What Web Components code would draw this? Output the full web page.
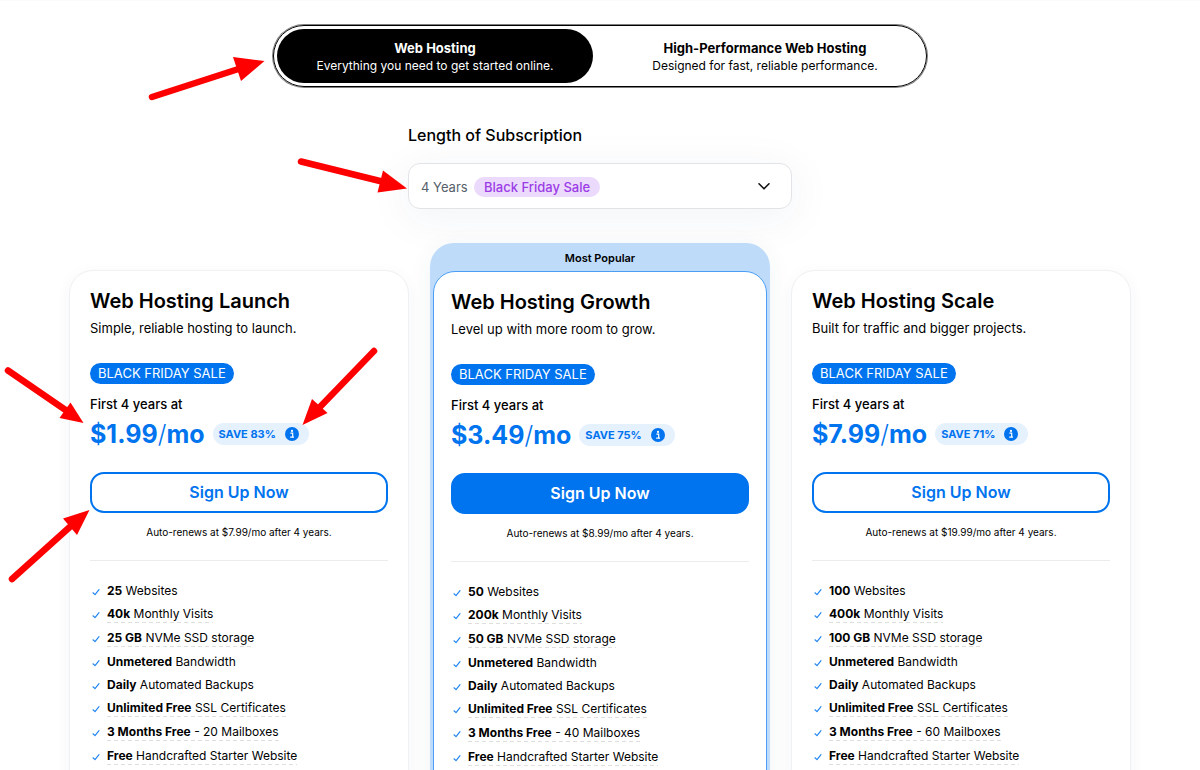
<!DOCTYPE html>
<html lang="en">
<head>
<meta charset="utf-8">
<meta name="viewport" content="width=device-width, initial-scale=1">
<title>Web Hosting Plans</title>
<style>
  html { scrollbar-width: none; }
  body {
    margin: 0;
    background: #fff;
    color: #000;
    font-family: Inter, "Liberation Sans", sans-serif;
    font-size: 12px;
    --blue: #0073ee;
  }
</style>
</head>
<body>
<hosting-page>
  <plan-tabs slot="tabs">
    <plan-tab selected>Web Hosting<span slot="note">Everything you need to get started online.</span></plan-tab>
    <plan-tab>High-Performance Web Hosting<span slot="note">Designed for fast, reliable performance.</span></plan-tab>
  </plan-tabs>
  <term-select slot="term"></term-select>
  <plan-card name="Web Hosting Launch" summary="Simple, reliable hosting to launch." price="$1.99" save="SAVE 83%" renew="$7.99">
    <plan-feature><b>25</b> Websites</plan-feature>
    <plan-feature hint><b>40k</b> Monthly Visits</plan-feature>
    <plan-feature hint><b>25 GB</b> NVMe SSD storage</plan-feature>
    <plan-feature><b>Unmetered</b> Bandwidth</plan-feature>
    <plan-feature><b>Daily</b> Automated Backups</plan-feature>
    <plan-feature hint><b>Unlimited Free</b> SSL Certificates</plan-feature>
    <plan-feature hint><b>3 Months Free</b> - 20 Mailboxes</plan-feature>
    <plan-feature hint><b>Free</b> Handcrafted Starter Website</plan-feature>
  </plan-card>
  <plan-card popular name="Web Hosting Growth" summary="Level up with more room to grow." price="$3.49" save="SAVE 75%" renew="$8.99">
    <plan-feature><b>50</b> Websites</plan-feature>
    <plan-feature hint><b>200k</b> Monthly Visits</plan-feature>
    <plan-feature hint><b>50 GB</b> NVMe SSD storage</plan-feature>
    <plan-feature><b>Unmetered</b> Bandwidth</plan-feature>
    <plan-feature><b>Daily</b> Automated Backups</plan-feature>
    <plan-feature hint><b>Unlimited Free</b> SSL Certificates</plan-feature>
    <plan-feature hint><b>3 Months Free</b> - 40 Mailboxes</plan-feature>
    <plan-feature hint><b>Free</b> Handcrafted Starter Website</plan-feature>
  </plan-card>
  <plan-card name="Web Hosting Scale" summary="Built for traffic and bigger projects." price="$7.99" save="SAVE 71%" renew="$19.99">
    <plan-feature><b>100</b> Websites</plan-feature>
    <plan-feature hint><b>400k</b> Monthly Visits</plan-feature>
    <plan-feature hint><b>100 GB</b> NVMe SSD storage</plan-feature>
    <plan-feature><b>Unmetered</b> Bandwidth</plan-feature>
    <plan-feature><b>Daily</b> Automated Backups</plan-feature>
    <plan-feature hint><b>Unlimited Free</b> SSL Certificates</plan-feature>
    <plan-feature hint><b>3 Months Free</b> - 60 Mailboxes</plan-feature>
    <plan-feature hint><b>Free</b> Handcrafted Starter Website</plan-feature>
  </plan-card>
  <callout-arrows slot="callouts"></callout-arrows>
</hosting-page>

<script>
  const define = (name, html, setup) => {
    const template = document.createElement('template');
    template.innerHTML = html;
    customElements.define(name, class extends HTMLElement {
      connectedCallback() {
        if (this.shadowRoot) return;
        const root = this.attachShadow({ mode: 'open' });
        root.append(template.content.cloneNode(true));
        if (setup) setup(this, root);
      }
    });
  };

  define('hosting-page', `
    <style>
      :host { display: block; position: relative; height: 100vh; overflow: hidden auto; scrollbar-width: none; }
      main { display: flex; flex-direction: column; padding: 24px 20px 40px; border-top: 1px solid #fafafa; }
      .plans {
        display: grid; grid-template-columns: repeat(3, minmax(0, 1fr)); gap: 21px; align-items: start;
        width: 100%; max-width: 1062px; margin: 34px auto 0;
      }
      @media (max-width: 860px) { .plans { grid-template-columns: minmax(0, 380px); justify-content: center; } }
    </style>
    <main>
      <slot name="tabs"></slot>
      <slot name="term"></slot>
      <section class="plans" aria-label="Hosting plans"><slot></slot></section>
    </main>
    <slot name="callouts"></slot>
  `);

  define('plan-tabs', `
    <style>
      :host {
        display: grid; grid-template-columns: 1fr 1fr; gap: 14px; box-sizing: border-box;
        width: 100%; max-width: 654px; margin: 0 auto; padding: 3px;
        border: 1px solid #000; border-radius: 32px; box-shadow: 0 0 0 1px rgba(0, 0, 0, .5);
      }
    </style>
    <slot></slot>
  `, host => host.setAttribute('role', 'tablist'));

  define('plan-tab', `
    <style>
      :host { display: grid; }
      button {
        display: flex; flex-direction: column; align-items: center; justify-content: center;
        height: 54px; padding: 2px 12px 0; border: 0; border-radius: 27px;
        background: none; color: #000; font: 12px/18px Inter, sans-serif; cursor: pointer;
      }
      :host([selected]) button { background: #000; color: #fff; }
      strong { font-size: 13px; font-weight: 700; }
      .note { font-size: 12px; }
    </style>
    <button type="button" role="tab"><strong><slot></slot></strong><span class="note"><slot name="note"></slot></span></button>
  `, (host, root) => {
    root.querySelector('button').setAttribute('aria-selected', host.hasAttribute('selected'));
  });

  define('term-select', `
    <style>
      :host { display: flex; flex-direction: column; gap: 16px; width: 100%; max-width: 384px; margin: 36px auto 0; }
      label { font-size: 16px; line-height: 24px; font-weight: 500; }
      .field { display: grid; align-items: center; border-radius: 12px; box-shadow: 0 8px 44px 4px rgba(20, 60, 110, .05); }
      .field > * { grid-area: 1 / 1; }
      select {
        appearance: none; height: 46px; padding: 2px 12px 0; border: 1px solid #e1e3e6; border-radius: 12px;
        background: #fff; color: #56616b; font: 13px/20px Inter, sans-serif;
      }
      .pill {
        justify-self: start; margin: 2px 0 0 66px; padding: 0 10px; border-radius: 10px;
        background: #ecdafc; color: #9b3ce6; font-size: 13px; line-height: 20px; font-weight: 500; pointer-events: none;
      }
      svg { justify-self: end; margin-right: 21px; pointer-events: none; }
    </style>
    <label for="term">Length of Subscription</label>
    <div class="field">
      <select id="term"><option>4 Years</option></select>
      <span class="pill">Black Friday Sale</span>
      <svg width="14" height="10" viewBox="0 0 14 10" fill="none" stroke="#111" stroke-width="1.6" stroke-linecap="round" stroke-linejoin="round"><path d="M2 2.800 7 7.800 12 2.800"/></svg>
    </div>
  `);

  define('plan-card', `
    <style>
      :host { display: block; min-width: 0; margin-top: 27px; }
      .tag { display: none; }
      .card {
        display: flex; flex-direction: column; align-items: stretch;
        padding: 17px 20px 24px; border: 1px solid #f0f1f3; border-radius: 24px;
        background: #fff; box-shadow: 0 4px 16px rgba(20, 60, 110, .05);
      }
      :host([popular]) { margin-top: 0; padding: 0 3px 3px; border-radius: 24px; background: #bedbfa; box-shadow: 0 4px 24px rgba(20, 60, 110, .06); }
      :host([popular]) .tag { display: block; padding-top: 2px; text-align: center; font-size: 11px; line-height: 26px; font-weight: 600; }
      :host([popular]) .card { padding: 17px 17px 24px; border-color: #4a9ff5; border-radius: 22px; box-shadow: none; }
      h2 { margin: 0; font-size: 20px; line-height: 26px; font-weight: 600; }
      .summary { margin: 4px 0 0; font-size: 13px; line-height: 20px; }
      .sale {
        align-self: flex-start; margin-top: 25px; padding: 0 8px; border-radius: 11px;
        background: var(--blue); color: #fff; font-size: 13px; line-height: 21px;
      }
      .term { margin: 10px 0 0; font-size: 13px; line-height: 20px; font-weight: 500; }
      .price { display: flex; align-items: center; gap: 8px; box-sizing: border-box; height: 38px; padding-top: 2px; color: var(--blue); }
      .amount { font-size: 25px; line-height: 36px; font-weight: 700; }
      .amount i { font-style: normal; font-weight: 300; }
      .save {
        display: flex; align-items: center; gap: 9px; height: 22px; padding: 0 10px 0 6px; border-radius: 11px;
        background: #e6f1fe; font-size: 11px; line-height: 22px; font-weight: 700;
      }
      .info { display: grid; padding: 0; border: 0; background: none; }
      .signup {
        height: 41px; margin-top: 20px; padding: 0 0 2px; border: 2px solid var(--blue); border-radius: 14px;
        background: #fff; color: var(--blue); font: 600 16px/24px Inter, sans-serif;
      }
      :host([popular]) .signup { background: var(--blue); color: #fff; }
      .renew { margin: 11px 0 20px; text-align: center; font-size: 10px; line-height: 16px; }
      hr { width: 100%; margin: 0 0 20px; border: 0; border-top: 1px solid #ececec; }
      .features { display: flex; flex-direction: column; }
    </style>
    <div class="tag">Most Popular</div>
    <article class="card">
      <h2></h2>
      <p class="summary"></p>
      <span class="sale">BLACK FRIDAY SALE</span>
      <p class="term">First 4 years at</p>
      <div class="price">
        <span class="amount"><span class="value"></span><i>/</i>mo</span>
        <span class="save"><span class="percent"></span>
          <button class="info" type="button" aria-label="Savings details">
            <svg width="14" height="14" viewBox="0 0 14 14"><circle cx="7" cy="7" r="7" fill="#0073ee"/><circle cx="7" cy="3.9" r="1.1" fill="#fff"/><path d="M5.4 6.2h2.3v3.6M5.2 10.1h3.8" fill="none" stroke="#fff" stroke-width="1.2"/></svg>
          </button>
        </span>
      </div>
      <button class="signup" type="button">Sign Up Now</button>
      <p class="renew"></p>
      <hr>
      <div class="features" role="list"><slot></slot></div>
    </article>
  `, (host, root) => {
    const put = (selector, text) => { root.querySelector(selector).textContent = text; };
    put('h2', host.getAttribute('name'));
    put('.summary', host.getAttribute('summary'));
    put('.value', host.getAttribute('price'));
    put('.percent', host.getAttribute('save'));
    put('.renew', `Auto-renews at ${host.getAttribute('renew')}/mo after 4 years.`);
  });

  define('plan-feature', `
    <style>
      :host { display: flex; align-items: flex-start; gap: 7px; box-sizing: border-box; height: 23px; padding: 1px 0 0 2px; line-height: 18px; }
      :host([hint]) { height: 24px; }
      svg { flex: none; margin-top: 6px; }
      :host([hint]) .text {
        background: repeating-linear-gradient(90deg, #dedede 0 4px, transparent 4px 7px) bottom / 100% 1px no-repeat;
      }
      ::slotted(b) { font-weight: 700; }
    </style>
    <svg width="8" height="8" viewBox="0 0 8 8" fill="none" stroke="#2186f2" stroke-width="1.2" stroke-linecap="round" stroke-linejoin="round"><path d="M1 4.8 3 6.6 7 1.6"/></svg>
    <span class="text"><slot></slot></span>
  `, host => host.setAttribute('role', 'listitem'));

  /* Hand-drawn pointers laid over the page, centred on the content column. */
  define('callout-arrows', `
    <style>
      :host { position: absolute; inset: 0; display: flex; justify-content: center; overflow: hidden; pointer-events: none; }
      svg { flex: none; }
    </style>
    <svg width="1200" height="770" viewBox="0 0 1200 770" fill="#f00" stroke="#f00" aria-hidden="true">
      <g stroke-width="6.5" stroke-linecap="round">
        <path d="M152 97 240 68.500M301 161.500 384 182M8 370.500 67 411M374 351 318 409M12 579 72 525"/>
      </g>
      <g stroke="none">
        <path d="M264.500 61 233 57 241 81z"/>
        <path d="M407 188.500 383 170.500 377.500 192.500z"/>
        <path d="M83.500 423 70.500 402.500 59.500 418z"/>
        <path d="M302.500 425 312 399 327.500 413z"/>
        <path d="M89.500 510 63 518.500 77 535z"/>
      </g>
    </svg>
  `);
</script>
</body>
</html>
